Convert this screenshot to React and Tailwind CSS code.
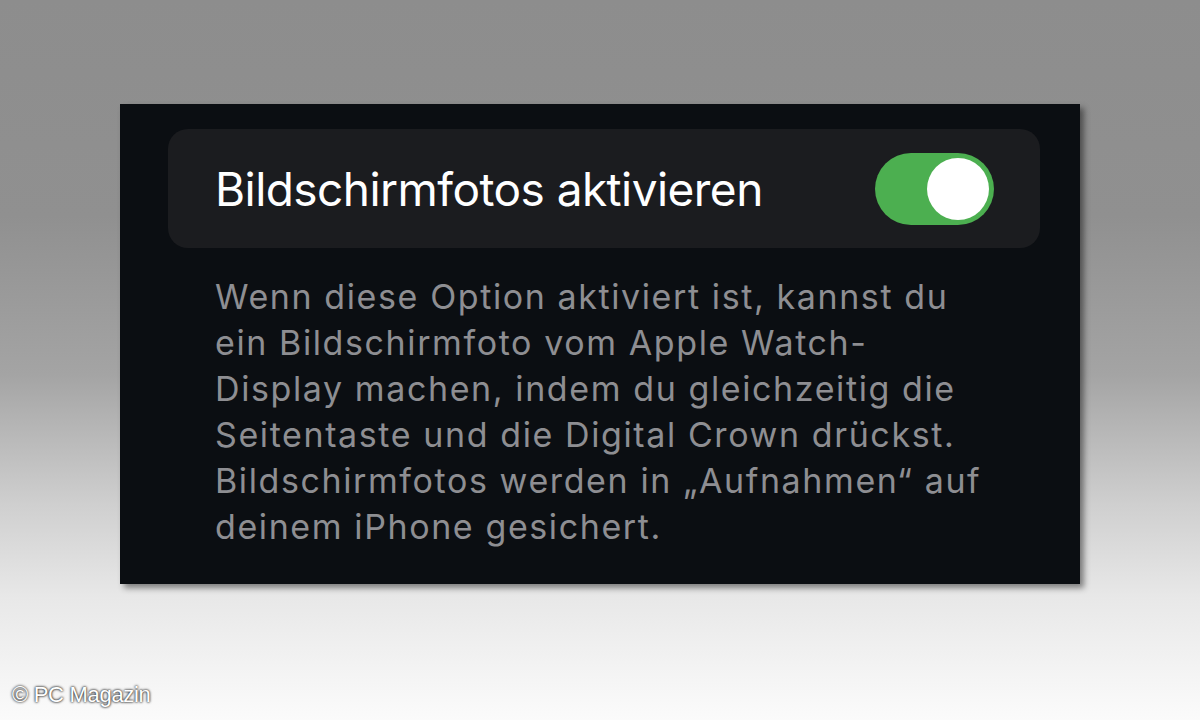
import React from "react";

const lines = [
  "Wenn diese Option aktiviert ist, kannst du",
  "ein Bildschirmfoto vom Apple Watch-",
  "Display machen, indem du gleichzeitig die",
  "Seitentaste und die Digital Crown drückst.",
  "Bildschirmfotos werden in „Aufnahmen“ auf",
  "deinem iPhone gesichert.",
];

const Toggle = () => (
  <div className="relative w-[119px] h-[72px] rounded-full bg-[#4caf50] shrink-0">
    <div className="absolute right-[5px] top-[5px] w-[62px] h-[62px] rounded-full bg-white" />
  </div>
);

export default function App() {
  return (
    <div
      className="relative w-[1200px] h-[720px] overflow-hidden bg-[linear-gradient(to_bottom,#8d8d8d_0%,#909090_30%,#a4a4a4_52%,#cfcfcf_70%,#e8e8e8_83%,#fbfbfb_100%)]"
      style={{ fontFamily: "Inter, 'Noto Sans', sans-serif" }}
    >
      <div className="pt-[104px] pl-[120px]">
        <div className="w-[960px] h-[480px] bg-[#0b0e12] shadow-[4px_4px_6px_rgba(0,0,0,0.45)] pt-[25px] pl-[48px] pr-[40px]">
          <div className="h-[119px] rounded-[20px] bg-[#1b1c1f] flex items-center justify-between pl-[47px] pr-[46px]">
            <span className="text-white text-[46px] tracking-[-0.55px] leading-none">
              Bildschirmfotos aktivieren
            </span>
            <Toggle />
          </div>
          <div className="pl-[47px] pt-[26px] text-[#8e8e92] text-[34px] leading-[46px] tracking-[1.6px]">
            {lines.map((l) => (
              <div key={l}>{l}</div>
            ))}
          </div>
        </div>
      </div>
      <div className="absolute left-[12px] bottom-[9px] text-white text-[22px] tracking-[-0.3px] [text-shadow:0_0_3px_#222,0_0_2px_#333]" style={{ fontFamily: "'Liberation Sans', Arial, sans-serif" }}>
        © PC Magazin
      </div>
    </div>
  );
}
